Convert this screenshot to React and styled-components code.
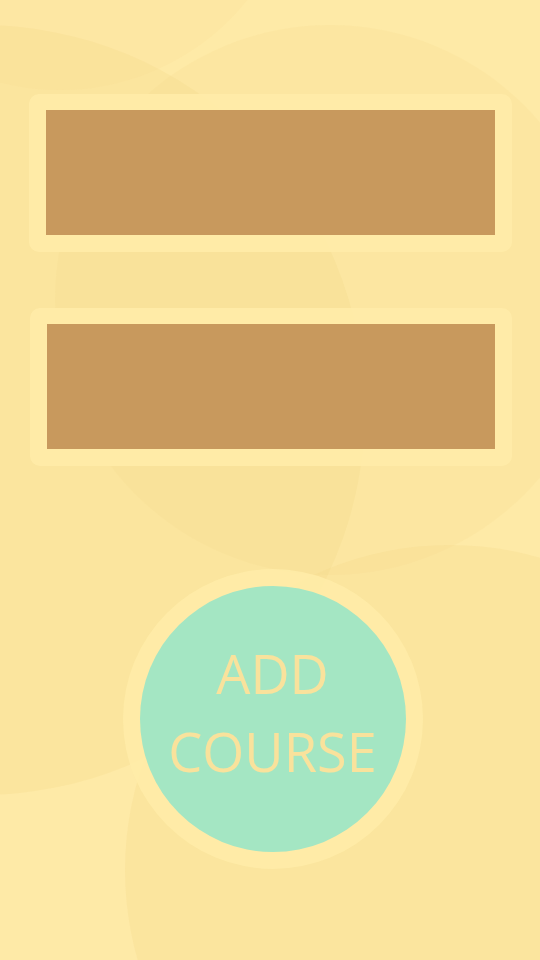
import React from "react";
import styled, { createGlobalStyle } from "styled-components";

const GlobalStyle = createGlobalStyle`
  html, body {
    margin: 0;
    padding: 0;
    background: #fde9a4;
  }
  * {
    box-sizing: border-box;
  }
`;

const Backdrop = () => (
  <StyledBackdrop viewBox="0 0 540 960" preserveAspectRatio="none">
    <circle cx="-20" cy="410" r="385" fill="#f6d98a" opacity="0.3" />
    <circle cx="330" cy="300" r="275" fill="#f6d98a" opacity="0.18" />
    <circle cx="60" cy="-150" r="240" fill="#f6d98a" opacity="0.15" />
    <circle cx="450" cy="870" r="325" fill="#f6d98a" opacity="0.28" />
  </StyledBackdrop>
);

const App = () => {
  return (
    <>
      <GlobalStyle />
      <StyledPage>
        <Backdrop />
        <StyledContent>
          <StyledCard>
            <StyledSlot />
          </StyledCard>
          <StyledCard $offset="1px">
            <StyledSlot />
          </StyledCard>
          <StyledButtonRing>
            <StyledButton>
              ADD
              <br />
              COURSE
            </StyledButton>
          </StyledButtonRing>
        </StyledContent>
      </StyledPage>
    </>
  );
};

export default App;

const StyledPage = styled.div`
  position: relative;
  width: 540px;
  height: 960px;
  overflow: hidden;
  background: #feeaa7;
`;

const StyledBackdrop = styled.svg`
  position: absolute;
  inset: 0;
  width: 100%;
  height: 100%;
`;

const StyledContent = styled.main`
  position: relative;
  display: flex;
  flex-direction: column;
  align-items: stretch;
  gap: 56px;
  padding: 94px 28px 0 29px;
`;

const StyledCard = styled.section`
  display: flex;
  height: 158px;
  padding: 16px 17px 17px 17px;
  margin-left: ${({ $offset }) => $offset || "0"};
  border-radius: 10px;
  background: rgba(255, 236, 168, 0.92);
`;

const StyledSlot = styled.div`
  flex: 1;
  background: #c8995d;
`;

const StyledButtonRing = styled.div`
  display: flex;
  align-self: center;
  width: 300px;
  height: 300px;
  margin: 47px 0 0 4px;
  padding: 17px;
  border-radius: 50%;
  background: rgba(255, 236, 168, 0.85);
`;

const StyledButton = styled.button`
  flex: 1;
  display: flex;
  align-items: center;
  justify-content: center;
  padding: 0 0 14px 0;
  border: 0;
  border-radius: 50%;
  background: #a4e6c3;
  color: #f9e29c;
  font-family: "Open Sans", sans-serif;
  font-size: 54px;
  line-height: 78px;
  text-align: center;
  cursor: pointer;
`;
